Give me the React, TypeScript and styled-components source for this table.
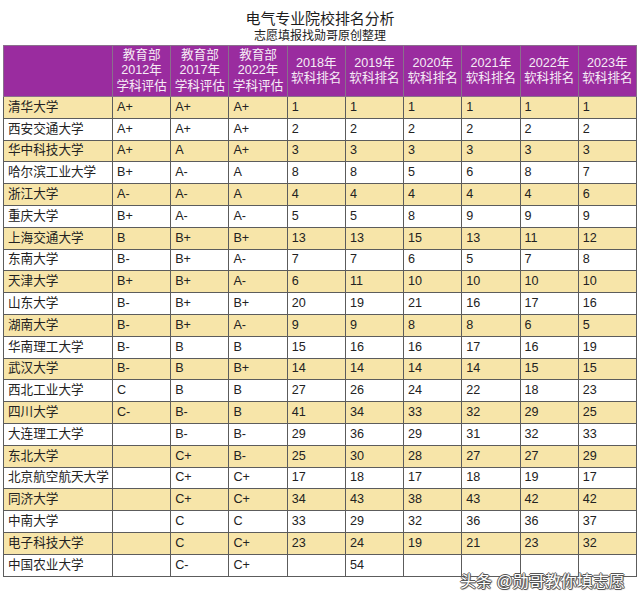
import React from "react"
import styled, { createGlobalStyle } from "styled-components"

const GlobalStyle = createGlobalStyle`
  html, body {
    margin: 0;
    padding: 0;
    background: #ffffff;
  }
  body {
    font-family: "Liberation Sans", "Noto Sans CJK SC", sans-serif;
  }
`

type Row = [string, string, string, string, ...string[]]

const rows: Row[] = [
  ["清华大学", "A+", "A+", "A+", "1", "1", "1", "1", "1", "1"],
  ["西安交通大学", "A+", "A+", "A+", "2", "2", "2", "2", "2", "2"],
  ["华中科技大学", "A+", "A", "A+", "3", "3", "3", "3", "3", "3"],
  ["哈尔滨工业大学", "B+", "A-", "A", "8", "8", "5", "6", "8", "7"],
  ["浙江大学", "A-", "A-", "A", "4", "4", "4", "4", "4", "6"],
  ["重庆大学", "B+", "A-", "A-", "5", "5", "8", "9", "9", "9"],
  ["上海交通大学", "B", "B+", "B+", "13", "13", "15", "13", "11", "12"],
  ["东南大学", "B-", "B+", "A-", "7", "7", "6", "5", "7", "8"],
  ["天津大学", "B+", "B+", "A-", "6", "11", "10", "10", "10", "10"],
  ["山东大学", "B-", "B+", "B+", "20", "19", "21", "16", "17", "16"],
  ["湖南大学", "B-", "B+", "A-", "9", "9", "8", "8", "6", "5"],
  ["华南理工大学", "B-", "B", "B", "15", "16", "16", "17", "16", "19"],
  ["武汉大学", "B-", "B", "B+", "14", "14", "14", "14", "15", "15"],
  ["西北工业大学", "C", "B", "B", "27", "26", "24", "22", "18", "23"],
  ["四川大学", "C-", "B-", "B", "41", "34", "33", "32", "29", "25"],
  ["大连理工大学", "", "B-", "B-", "29", "36", "29", "31", "32", "33"],
  ["东北大学", "", "C+", "B-", "25", "30", "28", "27", "27", "29"],
  ["北京航空航天大学", "", "C+", "C+", "17", "18", "17", "18", "19", "17"],
  ["同济大学", "", "C+", "C+", "34", "43", "38", "43", "42", "42"],
  ["中南大学", "", "C", "C", "33", "29", "32", "36", "36", "37"],
  ["电子科技大学", "", "C", "C+", "23", "24", "19", "21", "23", "32"],
  ["中国农业大学", "", "C-", "C+", "", "54", "", "", "", ""],
]

const evalYears = ["2012", "2017", "2022"]
const rankYears = ["2018", "2019", "2020", "2021", "2022", "2023"]

export default function App() {
  return (
    <>
      <GlobalStyle />
      <Page>
        <Title>电气专业院校排名分析</Title>
        <Subtitle>志愿填报找勋哥原创整理</Subtitle>
        <Table>
          <colgroup>
            <col style={{ width: 109 }} />
            {Array.from({ length: 9 }).map((_, i) => (
              <col key={i} />
            ))}
          </colgroup>
          <thead>
            <HeadRow>
              <HeadCell />
              {evalYears.map((y) => (
                <HeadCell key={y}>
                  教育部
                  <br />
                  {y}年
                  <br />
                  学科评估
                </HeadCell>
              ))}
              {rankYears.map((y) => (
                <HeadCell key={y}>
                  {y}年
                  <br />
                  软科排名
                </HeadCell>
              ))}
            </HeadRow>
          </thead>
          <tbody>
            {rows.map((row, i) => (
              <DataRow key={row[0]} $striped={i % 2 === 0}>
                {row.map((cell, j) => (
                  <Cell key={j}>{cell}</Cell>
                ))}
              </DataRow>
            ))}
          </tbody>
        </Table>
        <Watermark>头条 @勋哥教你填志愿</Watermark>
      </Page>
    </>
  )
}

const Page = styled.div`
  position: relative;
  width: 640px;
  height: 603px;
  padding: 10px 3px 0;
  box-sizing: border-box;
  display: flex;
  flex-direction: column;
  align-items: center;
  overflow: hidden;
`

const Title = styled.div`
  font-size: 15px;
  line-height: 18px;
  color: #1c1c1c;
  letter-spacing: -0.1px;
`

const Subtitle = styled.div`
  margin-top: 1px;
  font-size: 12px;
  line-height: 15px;
  color: #1c1c1c;
`

const Table = styled.table`
  margin-top: 1px;
  width: 634px;
  table-layout: fixed;
  border-collapse: collapse;
  border: 1.5px solid #4a4a4a;
`

const HeadRow = styled.tr`
  height: 51px;
  background: #9a2c9f;
`

const HeadCell = styled.th`
  padding: 0;
  border: 1px solid #8a6f8c;
  color: #f6ecf6;
  font-weight: normal;
  font-size: 12.6px;
  line-height: 15.5px;
  text-align: center;
  vertical-align: middle;
  white-space: nowrap;
`

const DataRow = styled.tr<{ $striped: boolean }>`
  height: 21.8px;
  background: ${({ $striped }) => ($striped ? "#f7e5a9" : "#ffffff")};
`

const Cell = styled.td`
  padding: 0 0 1px 4px;
  border: 1px solid #5c5c5c;
  color: #222222;
  font-size: 12.6px;
  line-height: 14px;
  white-space: nowrap;
  overflow: hidden;
  vertical-align: middle;
`

const Watermark = styled.div`
  position: absolute;
  left: 460px;
  top: 573px;
  font-size: 16px;
  line-height: 18px;
  color: #ffffff;
  white-space: nowrap;
  text-shadow:
    1px 0 0 #555,
    -1px 0 0 #555,
    0 1px 0 #555,
    0 -1px 0 #555,
    1px 1px 1px #777;
`
